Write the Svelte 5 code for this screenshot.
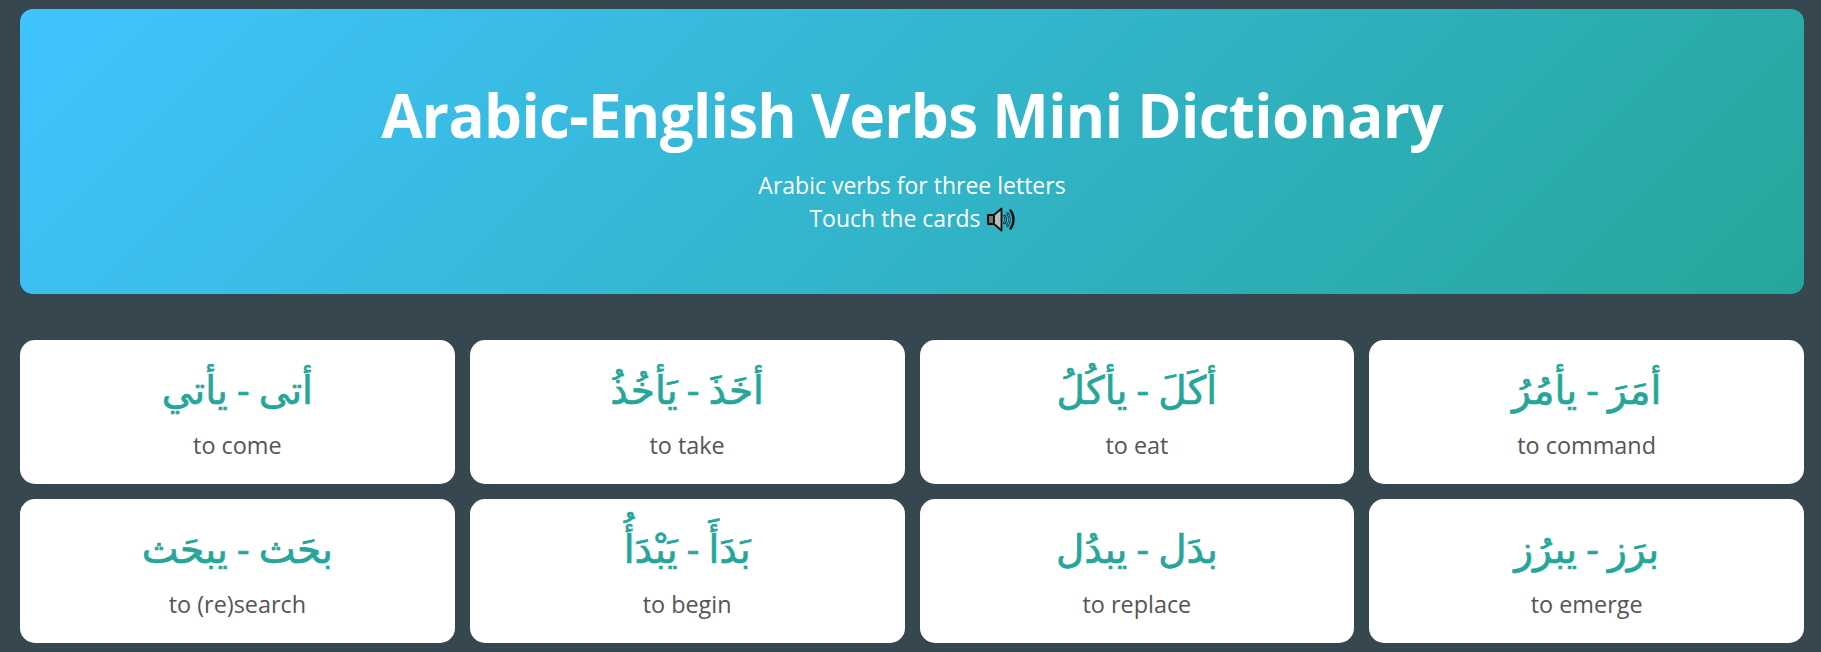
<script lang="ts">
    const verbs = [
        { ar: 'أتى - يأتي', en: 'to come' },
        { ar: 'أخَذَ - يَأخُذُ', en: 'to take' },
        { ar: 'أكَلَ - يأكُلُ', en: 'to eat' },
        { ar: 'أمَرَ - يأمُرُ', en: 'to command' },
        { ar: 'بحَث - يبحَث', en: 'to (re)search' },
        { ar: 'بَدَأَ - يَبْدَأُ', en: 'to begin' },
        { ar: 'بدَل - يبدُل', en: 'to replace' },
        { ar: 'برَز - يبرُز', en: 'to emerge' }
    ];
</script>

<div class="page">
    <header class="hero">
        <h1>Arabic-English Verbs Mini Dictionary</h1>
        <p>Arabic verbs for three letters</p>
        <p>
            Touch the cards
            <svg class="speaker" viewBox="0 0 28 25" aria-hidden="true">
                <path d="M1 8h6v9H1z" fill="#777" stroke="#0c0c0c" stroke-width="1.8" stroke-linejoin="round" />
                <path d="M7 8l7.5-6.5v22L7 17z" fill="#bdbdbd" stroke="#0c0c0c" stroke-width="1.8" stroke-linejoin="round" />
                <g fill="none" stroke-linecap="round">
                    <path d="M17.5 9c1.5 2 1.5 5 0 7M20.5 6.5c2.6 3.5 2.6 8.5 0 12M23.5 3.5c4 5 4 13 0 18" stroke="#0c0c0c" stroke-width="2.4" />
                    <path d="M17.5 9c1.5 2 1.5 5 0 7M20.5 6.5c2.6 3.5 2.6 8.5 0 12" stroke="#3fc4f2" stroke-width="1" />
                </g>
            </svg>
        </p>
    </header>

    <div class="grid">
        {#each verbs as verb}
            <div class="card">
                <div class="arabic" dir="rtl">{verb.ar}</div>
                <div class="english">{verb.en}</div>
            </div>
        {/each}
    </div>
</div>

<style>
    :global(body) {
        margin: 0;
        background: #37474f;
        font-family: 'Open Sans', 'Noto Sans', 'DejaVu Sans', sans-serif;
    }

    .page {
        padding: 9px 17px 9px 20px;
        height: 652px;
        box-sizing: border-box;
        overflow: hidden;
    }

    .hero {
        height: 285px;
        box-sizing: border-box;
        padding-top: 66px;
        border-radius: 13px;
        background: linear-gradient(135deg, #40c4ff, #26a69a);
        color: #fff;
        text-align: center;
    }

    h1 {
        margin: 0 0 14px;
        font-size: 60px;
        line-height: 80px;
        font-weight: 700;
        letter-spacing: -0.65px;
    }

    .hero p {
        margin: 0;
        font-size: 23px;
        line-height: 33px;
    }

    .speaker {
        width: 28px;
        height: 25px;
        vertical-align: -5px;
    }

    .grid {
        display: grid;
        grid-template-columns: repeat(4, 1fr);
        gap: 15.3px 15px;
        margin-top: 46px;
    }

    .card {
        height: 143.7px;
        box-sizing: border-box;
        padding-top: 23px;
        background: #fff;
        border-radius: 15px;
        text-align: center;
    }

    .arabic {
        font-size: 39px;
        line-height: 52px;
        word-spacing: -1px;
        color: #26a69a;
        -webkit-text-stroke: 0.7px #26a69a;
    }

    .english {
        margin-top: 14px;
        font-size: 23.4px;
        line-height: 32px;
        color: #555;
    }
</style>
